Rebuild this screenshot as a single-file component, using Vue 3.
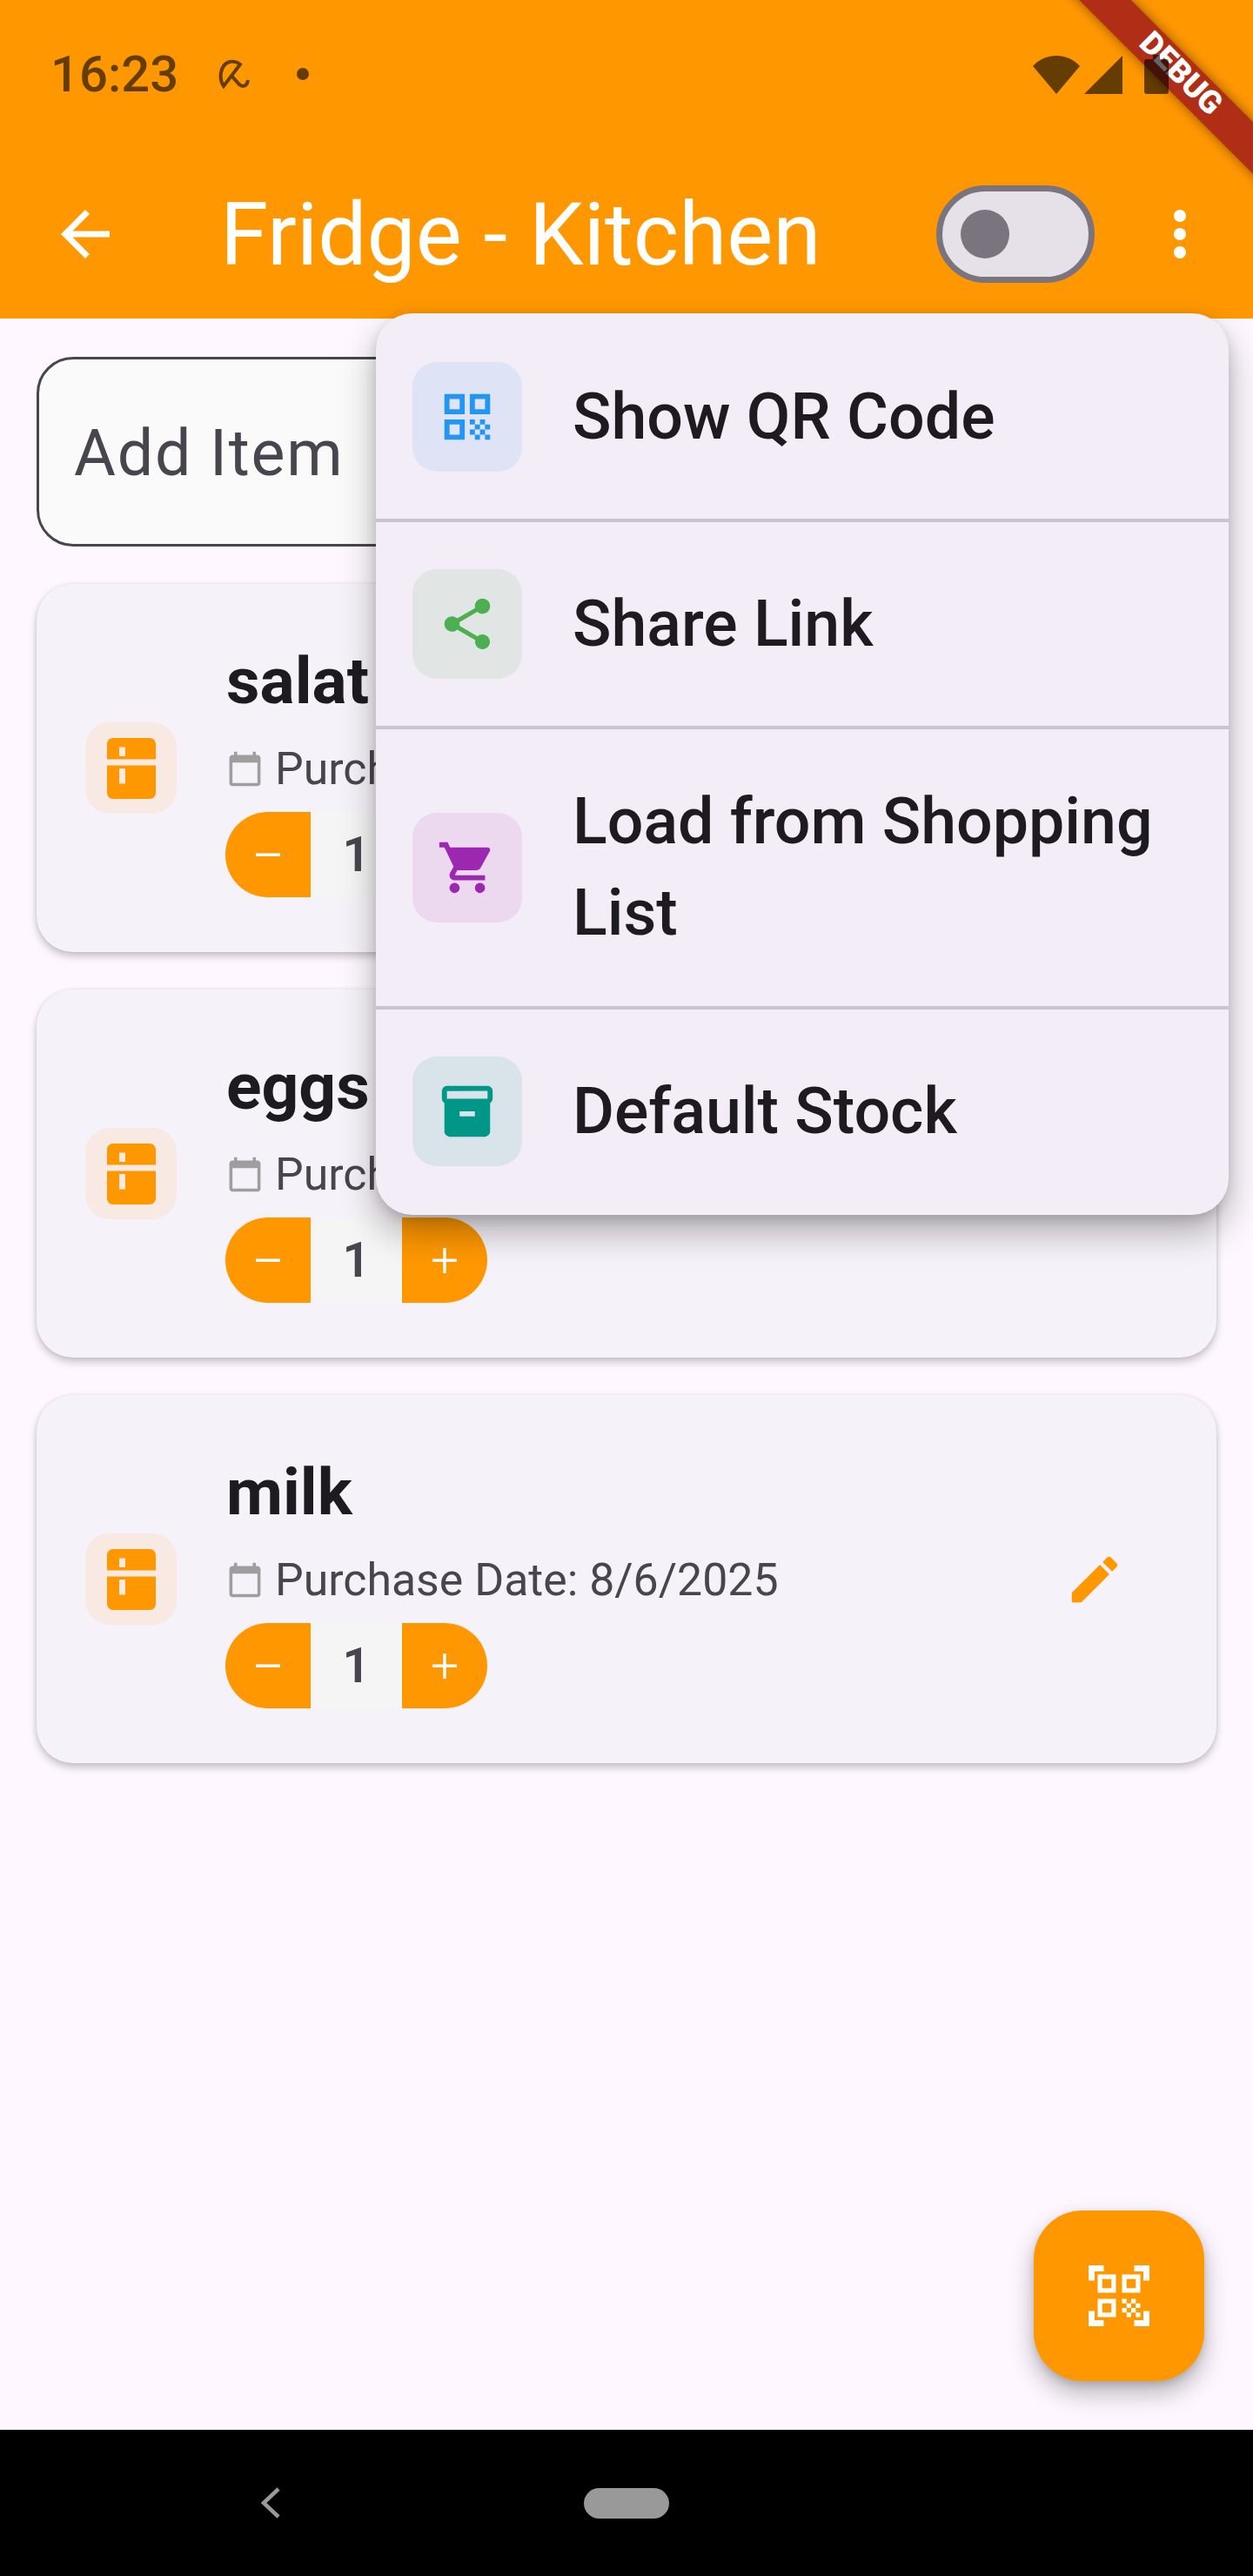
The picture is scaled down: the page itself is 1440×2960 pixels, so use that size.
<script setup>
// Fridge screen with the overflow menu open

const items = [
   { name: 'salat', date: '8/6/2025', qty: 1 },
   { name: 'eggs', date: '8/6/2025', qty: 1 },
   { name: 'milk', date: '8/6/2025', qty: 1 }
]

const menu_items = [
   {
      label: 'Show QR Code',
      color: '#2196f3',
      bg: '#dee4f6',
      d: 'M3 11h8V3H3v8zm2-6h4v4H5V5zM3 21h8v-8H3v8zm2-6h4v4H5v-4zM13 3v8h8V3h-8zm6 6h-4V5h4v4zM13 13h2v2h-2zM15 15h2v2h-2zM13 17h2v2h-2zM15 19h2v2h-2zM17 17h2v2h-2zM19 19h2v2h-2zM19 15h2v2h-2zM17 13h2v2h-2z'
   },
   {
      label: 'Share Link',
      color: '#4caf50',
      bg: '#e1e6e4',
      d: 'M18 16.08c-.76 0-1.44.3-1.96.77L8.91 12.7c.05-.23.09-.46.09-.7s-.04-.47-.09-.7l7.05-4.11c.54.5 1.25.81 2.04.81 1.66 0 3-1.34 3-3s-1.34-3-3-3-3 1.34-3 3c0 .24.04.47.09.7L8.04 9.81C7.5 9.31 6.79 9 6 9c-1.66 0-3 1.34-3 3s1.34 3 3 3c.79 0 1.5-.31 2.04-.81l7.12 4.16c-.05.21-.08.43-.08.65 0 1.61 1.31 2.92 2.92 2.92 1.61 0 2.92-1.31 2.92-2.92s-1.31-2.92-2.92-2.92z'
   },
   {
      label: 'Load from Shopping List',
      color: '#9c27b0',
      bg: '#ecd9f0',
      d: 'M7 18c-1.1 0-1.99.9-1.99 2S5.9 22 7 22s2-.9 2-2-.9-2-2-2zM1 2v2h2l3.6 7.59-1.35 2.45c-.16.28-.25.61-.25.96 0 1.1.9 2 2 2h12v-2H7.42c-.14 0-.25-.11-.25-.25l.03-.12.9-1.63h7.45c.75 0 1.41-.41 1.75-1.03l3.58-6.49c.08-.14.12-.31.12-.48 0-.55-.45-1-1-1H5.21l-.94-2H1zm16 16c-1.1 0-1.99.9-1.99 2s.89 2 1.99 2 2-.9 2-2-.9-2-2-2z'
   },
   {
      label: 'Default Stock',
      color: '#009688',
      bg: '#d9e4ea',
      d: 'M20 2H4c-1 0-2 .9-2 2v3.01c0 .72.43 1.34 1 1.69V20c0 1.1 1.1 2 2 2h14c.9 0 2-.9 2-2V8.7c.57-.35 1-.97 1-1.69V4c0-1.1-1-2-2-2zm-5 12H9v-2h6v2zm5-7H4V4l16-.02V7z'
   }
]

const fridge_path = 'M18 2.01L6 2c-1.1 0-2 .89-2 2v5h16V4c0-1.11-.9-1.99-2-1.99zM10 8H8V5h2v3zM4 11v9c0 1.1.9 2 2 2h12c1.1 0 2-.9 2-2v-9H4zm6 6H8v-5h2v5z'
const calendar_path = 'M20 3h-1V1h-2v2H7V1H5v2H4c-1.1 0-2 .9-2 2v16c0 1.1.9 2 2 2h16c1.1 0 2-.9 2-2V5c0-1.1-.9-2-2-2zm0 18H4V8h16v13z'
const edit_path = 'M3 17.25V21h3.75L17.81 9.94l-3.75-3.75L3 17.25zM20.71 7.04c.39-.39.39-1.02 0-1.41l-2.34-2.34c-.39-.39-1.02-.39-1.41 0l-1.83 1.83 3.75 3.75 1.83-1.83z'
</script>


<template>
   <div class="page">
      <header class="app_bar">
         <div class="status_bar">
            <span class="clock">16:23</span>
            <svg class="umbrella" width="40" height="34" viewBox="0 0 40 34" fill="none" stroke="#663d00" stroke-width="4">
               <path d="M6 31C0 22 2 6 13 3c4-1 8 0 12 3L6 31z" />
               <path d="M15 19l9 10c3 3 9 3 10-5" />
            </svg>
            <span class="status_dot"></span>
            <div class="status_icons">
               <svg width="54" height="44" viewBox="0 0 54 44"><path d="M0 12C14-4 40-4 54 12L27 44z" fill="#663d00" /></svg>
               <svg class="signal" width="44" height="44" viewBox="0 0 44 44"><path d="M44 0v44H0z" fill="#663d00" /></svg>
               <svg class="battery" width="28" height="45" viewBox="0 0 28 45"><path d="M10 0h8v5h7c2 0 3 1 3 3v34c0 2-1 3-3 3H3c-2 0-3-1-3-3V8c0-2 1-3 3-3h7z" fill="#000" fill-opacity=".6" /></svg>
            </div>
         </div>
         <div class="toolbar">
            <svg class="toolbar_icon" viewBox="0 0 24 24"><path d="M20 11H7.83l5.59-5.59L12 4l-8 8 8 8 1.41-1.41L7.83 13H20v-2z" /></svg>
            <h1 class="title">Fridge - Kitchen</h1>
            <div class="toggle"><span class="toggle_thumb"></span></div>
            <svg class="toolbar_icon" viewBox="0 0 24 24"><path d="M12 8c1.1 0 2-.9 2-2s-.9-2-2-2-2 .9-2 2 .9 2 2 2zm0 2c-1.1 0-2 .9-2 2s.9 2 2 2 2-.9 2-2-.9-2-2-2zm0 6c-1.1 0-2 .9-2 2s.9 2 2 2 2-.9 2-2-.9-2-2-2z" /></svg>
         </div>
      </header>

      <main class="content">
         <div class="add_item">Add Item</div>

         <div v-for="item in items" :key="item.name" class="card">
            <div class="card_tile">
               <svg width="84" height="84" viewBox="0 0 24 24"><path :d="fridge_path" fill="#ff9800" fill-rule="evenodd" /></svg>
            </div>
            <div class="card_info">
               <div class="item_name">{{ item.name }}</div>
               <div class="item_date">
                  <svg width="43" height="43" viewBox="0 0 24 24"><path :d="calendar_path" fill="#9e9e9e" /></svg>
                  <span>Purchase Date: {{ item.date }}</span>
               </div>
               <div class="stepper">
                  <div class="step_btn step_minus"><svg width="98" height="98" viewBox="0 0 98 98"><path d="M35 47.5h28v3.5H35z" fill="#fff" /></svg></div>
                  <div class="step_qty">{{ item.qty }}</div>
                  <div class="step_btn step_plus"><svg width="98" height="98" viewBox="0 0 98 98"><path d="M35 47.5h12.25V35h3.5v12.5H63V51H50.75v13h-3.5V51H35z" fill="#fff" /></svg></div>
               </div>
            </div>
            <svg class="edit_icon" width="70" height="70" viewBox="0 0 24 24"><path :d="edit_path" fill="#ff9800" /></svg>
         </div>

         <div class="fab">
            <svg width="84" height="84" viewBox="0 0 24 24"><path fill="#fff" d="M9.5 6.5v3h-3v-3h3M11 5H5v6h6V5zm-1.5 9.5v3h-3v-3h3M11 13H5v6h6v-6zm6.5-6.5v3h-3v-3h3M19 5h-6v6h6V5zm-6 8h1.5v1.5H13V13zm1.5 1.5H16V16h-1.5v-1.5zM16 13h1.5v1.5H16V13zm-3 3h1.5v1.5H13V16zm1.5 1.5H16V19h-1.5v-1.5zM16 16h1.5v1.5H16V16zm1.5-1.5H19V16h-1.5v-1.5zm0 3H19V19h-1.5v-1.5zM22 7h-2V4h-3V2h5v5zm0 15v-5h-2v3h-3v2h5zM2 22h5v-2H4v-3H2v5zM2 2v5h2V4h3V2H2z" /></svg>
         </div>
      </main>

      <footer class="nav_bar">
         <svg class="nav_back" width="22" height="36" viewBox="0 0 22 36" fill="none" stroke="#999" stroke-width="4.5"><path d="M20 2L3 18l17 16" /></svg>
         <span class="nav_pill"></span>
      </footer>

      <div class="menu">
         <div v-for="entry in menu_items" :key="entry.label" class="menu_item">
            <div class="menu_tile" :style="{ background: entry.bg }">
               <svg width="70" height="70" viewBox="0 0 24 24"><path :d="entry.d" :fill="entry.color" /></svg>
            </div>
            <span class="menu_label">{{ entry.label }}</span>
         </div>
      </div>

      <div class="debug_banner">DEBUG</div>
   </div>
</template>


<style>
html, body {
   margin: 0;
   padding: 0;
}
</style>

<style scoped>
.page {
   position: relative;
   display: flex;
   flex-direction: column;
   width: 1440px;
   height: 2960px;
   overflow: hidden;
   background: #fef7ff;
   font-family: Roboto, "Liberation Sans", sans-serif;
   color: #1d1b20;
}

/* app bar */
.app_bar {
   height: 366px;
   background: #ff9800;
}
.status_bar {
   position: relative;
   z-index: 3;
   display: flex;
   align-items: center;
   height: 170px;
   padding: 0 97px 0 58px;
}
.clock {
   font-size: 58px;
   font-weight: 500;
   color: #663d00;
}
.umbrella {
   margin-left: 46px;
}
.status_dot {
   width: 14px;
   height: 14px;
   margin-left: 50px;
   border-radius: 50%;
   background: #663d00;
}
.status_icons {
   display: flex;
   align-items: flex-end;
   margin-left: auto;
}
.signal {
   margin-left: 5px;
}
.battery {
   margin-left: 25px;
}
.toolbar {
   display: flex;
   align-items: center;
   height: 196px;
   padding: 2px 42px 0 56px;
   box-sizing: border-box;
}
.toolbar_icon {
   width: 84px;
   height: 84px;
   fill: #fff;
   flex: none;
}
.title {
   flex: 1;
   margin: 0 0 0 113px;
   font-size: 100px;
   font-weight: 400;
   color: #fff;
}
.toggle {
   display: flex;
   align-items: center;
   box-sizing: border-box;
   width: 182px;
   height: 112px;
   margin-right: 56px;
   padding-left: 21px;
   border: 7px solid #79747e;
   border-radius: 56px;
   background: #e6e0e9;
}
.toggle_thumb {
   width: 56px;
   height: 56px;
   border-radius: 50%;
   background: #79747e;
}

/* list */
.content {
   position: relative;
   flex: 1;
   display: flex;
   flex-direction: column;
   gap: 43px;
   padding: 44px 42px 0;
}
.add_item {
   display: flex;
   align-items: center;
   box-sizing: border-box;
   height: 218px;
   padding: 4px 0 0 40px;
   border: 3.5px solid #49454f;
   border-radius: 42px;
   background: #fafafa;
   font-size: 73.5px;
   letter-spacing: 1.75px;
   color: #49454f;
}
.card {
   display: flex;
   align-items: center;
   height: 423px;
   padding: 0 105px 0 56px;
   box-sizing: border-box;
   border-radius: 42px;
   background: #f6f2f9;
   box-shadow: 0 5px 10px rgba(0, 0, 0, .22), 0 0 4px rgba(0, 0, 0, .08);
}
.card_tile {
   display: flex;
   align-items: center;
   justify-content: center;
   flex: none;
   width: 105px;
   height: 105px;
   border-radius: 28px;
   background: #f9e9e3;
}
.card_info {
   flex: 1;
   margin-left: 56px;
}
.item_name {
   height: 92px;
   padding: 2px 0 0 1px;
   font-size: 75px;
   font-weight: 700;
   line-height: 92px;
}
.item_date {
   display: flex;
   align-items: center;
   gap: 13px;
   height: 100px;
   margin: 5px 0 0 1px;
   font-size: 51.8px;
   color: #49454f;
}
.stepper {
   display: flex;
   height: 98px;
}
.step_btn {
   width: 98px;
   height: 98px;
   background: #ff9800;
}
.step_btn svg {
   display: block;
}
.step_minus {
   border-radius: 49px 0 0 49px;
}
.step_plus {
   border-radius: 0 49px 49px 0;
}
.step_qty {
   width: 105px;
   background: #f5f5f5;
   font-size: 56px;
   font-weight: 600;
   line-height: 98px;
   text-align: center;
   color: #49454f;
}
.edit_icon {
   flex: none;
}

/* floating button */
.fab {
   position: absolute;
   right: 56px;
   bottom: 56px;
   display: flex;
   align-items: center;
   justify-content: center;
   width: 196px;
   height: 196px;
   border-radius: 56px;
   background: #ff9800;
   box-shadow: 0 14px 28px rgba(0, 0, 0, .28), 0 4px 10px rgba(0, 0, 0, .12);
}

/* system nav */
.nav_bar {
   position: relative;
   display: flex;
   align-items: center;
   height: 168px;
   padding-left: 300px;
   background: #000;
}
.nav_pill {
   width: 98px;
   height: 35px;
   margin-left: 349px;
   border-radius: 18px;
   background: #999;
}

/* popup menu */
.menu {
   position: absolute;
   top: 360px;
   left: 432px;
   width: 980px;
   padding: 2px 0;
   border-radius: 42px;
   background: #f3edf7;
   box-shadow: 0 20px 40px rgba(0, 0, 0, .3), 0 4px 14px rgba(0, 0, 0, .12);
}
.menu_item {
   display: flex;
   align-items: center;
   gap: 58px;
   padding: 54px 42px;
   border-bottom: 4px solid #cac4d0;
}
.menu_item:last-child {
   border-bottom: 0;
}
.menu_tile {
   display: flex;
   align-items: center;
   justify-content: center;
   flex: none;
   width: 126px;
   height: 126px;
   border-radius: 28px;
}
.menu_label {
   font-size: 73.5px;
   font-weight: 500;
   line-height: 105px;
}

/* debug ribbon */
.debug_banner {
   position: absolute;
   top: 62px;
   left: 1143px;
   z-index: 2;
   box-sizing: border-box;
   width: 420px;
   height: 42px;
   padding-left: 8px;
   background: rgba(150, 10, 30, .75);
   box-shadow: 0 0 14px rgba(0, 0, 0, .45);
   transform: rotate(45deg);
   font-size: 36.5px;
   font-weight: 900;
   line-height: 38px;
   text-align: center;
   color: #fff;
}
</style>
